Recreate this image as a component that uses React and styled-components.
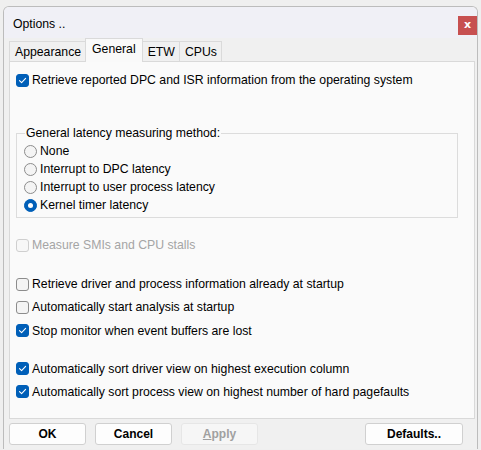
import React, { useState } from 'react';
import styled, { createGlobalStyle, css } from 'styled-components';

const GlobalStyle = createGlobalStyle`
  html, body {
    margin: 0;
    padding: 0;
    background: #efefef;
    font-family: "Liberation Sans", Arial, sans-serif;
    font-size: 12.25px;
    color: #000;
  }
`;

const Window = styled.div`
  box-sizing: border-box;
  margin: 6px 0 0 3px;
  width: 475px;
  height: 443px;
  border: 1px solid #bcbcbc;
  border-bottom: none;
  border-radius: 6px 6px 0 0;
  background: #f0f0f0;
  display: flex;
  flex-direction: column;
  overflow: hidden;
`;

const TitleBar = styled.div`
  height: 29px;
  flex: none;
  background: #f0f0f6;
  display: flex;
  align-items: center;
  justify-content: space-between;
  padding-left: 9px;
  padding-top: 2px;
`;

const CloseButton = styled.button`
  align-self: flex-start;
  margin-top: 7px;
  width: 19px;
  height: 19px;
  border: none;
  padding: 0 0 2px;
  background: #c75050;
  color: #fff;
  font-family: "DejaVu Sans", sans-serif;
  font-weight: bold;
  font-size: 11px;
  line-height: 1;
  cursor: pointer;
`;

const TabStrip = styled.div`
  display: flex;
  align-items: flex-end;
  height: 23px;
  padding-left: 5px;
  flex: none;
`;

const Tab = styled.div`
  box-sizing: border-box;
  height: 20px;
  padding: 0 4px 0 5px;
  display: flex;
  align-items: center;
  border: 1px solid #dadada;
  border-bottom: none;
  border-left: none;
  background: #f0f0f0;
  cursor: default;
  ${(p) => p.$first && css`border-left: 1px solid #dadada;`}
  ${(p) =>
    p.$active &&
    css`
      height: 24px;
      margin-bottom: -1px;
      padding: 0 6px 4px;
      background: #f9f9f9;
      border-left: 1px solid #dadada;
      margin-left: -1px;
      position: relative;
      z-index: 1;
    `}
`;

const Panel = styled.div`
  box-sizing: border-box;
  margin: 0 2px 0 5px;
  height: 358px;
  flex: none;
  border: 1px solid #d9d9d9;
  background: #fafafa;
  padding: 0 6px;
  display: flex;
  flex-direction: column;
`;

const Row = styled.label`
  display: flex;
  align-items: center;
  height: ${(p) => p.$h || 22}px;
  margin-top: ${(p) => p.$gap || 0}px;
  gap: 3px;
  color: ${(p) => (p.$disabled ? '#a5a5a5' : '#000')};
  white-space: nowrap;
`;

const Box = styled.span`
  box-sizing: border-box;
  width: 13px;
  height: 13px;
  border-radius: 3px;
  flex: none;
  display: flex;
  align-items: center;
  justify-content: center;
  border: 1px solid ${(p) => (p.$disabled ? '#cfcfcf' : p.$checked ? '#005fb8' : '#8c8c8c')};
  background: ${(p) => (p.$checked ? '#005fb8' : p.$disabled ? '#f7f7f7' : '#f4f4f4')};
`;

const Radio = styled.span`
  box-sizing: border-box;
  width: 13px;
  height: 13px;
  border-radius: 50%;
  flex: none;
  display: flex;
  align-items: center;
  justify-content: center;
  border: 1px solid ${(p) => (p.$checked ? '#005fb8' : '#8c8c8c')};
  background: ${(p) => (p.$checked ? '#005fb8' : '#f4f4f4')};

  &::after {
    content: '';
    display: ${(p) => (p.$checked ? 'block' : 'none')};
    width: 5px;
    height: 5px;
    border-radius: 50%;
    background: #fff;
  }
`;

const Group = styled.fieldset`
  box-sizing: border-box;
  margin: 36px 0 0 0;
  width: 442px;
  border: 1px solid #dcdcdc;
  padding: 3px 0 3px 7px;
  display: flex;
  flex-direction: column;
`;

const Legend = styled.legend`
  padding: 0 1px;
  margin-left: 1px;
  line-height: 12px;
`;

const ButtonBar = styled.div`
  display: flex;
  align-items: center;
  padding: 4px 0 0 5px;
  gap: 9px;
`;

const Button = styled.button`
  box-sizing: border-box;
  width: ${(p) => p.$w || 77}px;
  height: 22px;
  margin-left: ${(p) => p.$push || 0}px;
  border: 1px solid ${(p) => (p.disabled ? '#e6e6e6' : '#d0d0d0')};
  border-radius: 3px;
  background: ${(p) => (p.disabled ? '#f6f6f6' : '#fdfdfd')};
  color: ${(p) => (p.disabled ? '#a0a0a0' : '#000')};
  font-family: "Liberation Sans", Arial, sans-serif;
  font-weight: bold;
  font-size: 12px;
  padding: 0;

  u {
    text-decoration: underline;
  }
`;

function Check({ checked, disabled }) {
  return (
    <Box $checked={checked} $disabled={disabled}>
      {checked && (
        <svg width="9" height="9" viewBox="0 0 9 9">
          <path d="M1.5 4.6 L3.6 6.6 L7.6 2.4" fill="none" stroke="#fff" strokeWidth="1.1" strokeLinecap="round" strokeLinejoin="round" />
        </svg>
      )}
    </Box>
  );
}

const methods = [
  'None',
  'Interrupt to DPC latency',
  'Interrupt to user process latency',
  'Kernel timer latency',
];

export default function App() {
  const [method, setMethod] = useState(3);
  const tabs = ['Appearance', 'General', 'ETW', 'CPUs'];

  return (
    <>
      <GlobalStyle />
      <Window>
        <TitleBar>
          <span>Options ..</span>
          <CloseButton>x</CloseButton>
        </TitleBar>
        <TabStrip>
          {tabs.map((t, i) => (
            <Tab key={t} $first={i === 0} $active={i === 1}>
              {t}
            </Tab>
          ))}
        </TabStrip>
        <Panel>
          <Row $gap={7}>
            <Check checked />
            Retrieve reported DPC and ISR information from the operating system
          </Row>
          <Group>
            <Legend>General latency measuring method:</Legend>
            {methods.map((m, i) => (
              <Row key={m} $h={18} onClick={() => setMethod(i)}>
                <Radio $checked={method === i} />
                {m}
              </Row>
            ))}
          </Group>
          <Row $gap={16} $disabled>
            <Check disabled />
            Measure SMIs and CPU stalls
          </Row>
          <Row $gap={17}>
            <Check />
            Retrieve driver and process information already at startup
          </Row>
          <Row $h={24}>
            <Check />
            Automatically start analysis at startup
          </Row>
          <Row $h={23}>
            <Check checked />
            Stop monitor when event buffers are lost
          </Row>
          <Row $gap={15} $h={23}>
            <Check checked />
            Automatically sort driver view on highest execution column
          </Row>
          <Row $h={23}>
            <Check checked />
            Automatically sort process view on highest number of hard pagefaults
          </Row>
        </Panel>
        <ButtonBar>
          <Button>OK</Button>
          <Button>Cancel</Button>
          <Button disabled>
            <u>A</u>pply
          </Button>
          <Button $w={98} $push={98}>Defaults..</Button>
        </ButtonBar>
      </Window>
    </>
  );
}
